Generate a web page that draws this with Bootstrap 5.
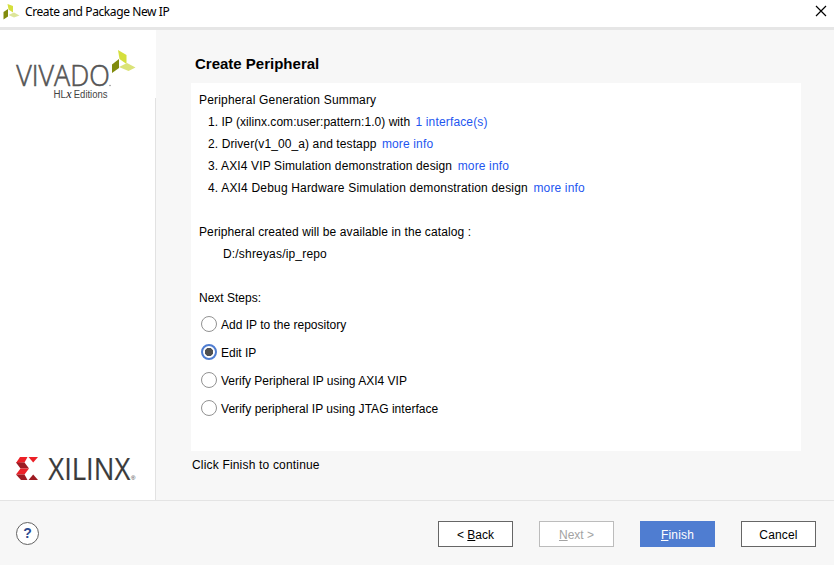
<!DOCTYPE html>
<html lang="en">
<head>
<meta charset="utf-8">
<meta name="viewport" content="width=device-width, initial-scale=1">
<title>Create and Package New IP</title>
<link href="https://cdn.jsdelivr.net/npm/bootstrap@5.3.0/dist/css/bootstrap.min.css" rel="stylesheet">
<style>
body{font-family:"Liberation Sans",Arial,sans-serif;font-size:12px;line-height:22px;color:#000;background:#f7f7f7}
svg{display:block;overflow:visible}
.wizard{width:834px;height:565px}
.titlebar{height:30px;border-bottom:3px solid #e6e6e6;font-family:"Noto Sans","Open Sans",sans-serif;padding:0 7px 3px 3px}
.title-text{font-size:12px;letter-spacing:-.4px;margin-left:5px}
.sidebar{width:156px;padding:19px 0 14px 15px;background:linear-gradient(#e2e2e2,#e2e2e2) right bottom/1px calc(100% - 68px) no-repeat #fff}
.content{padding:23px 33px 0 35px}
.page-title{font-size:15px;font-weight:700;line-height:22px;margin:0 0 8px 4px}
.summary{height:368px;padding:6px 8px}
.summary ol{padding-left:9px;margin-bottom:22px;list-style:none}
.summary a{color:#1e56f0;text-decoration:none;margin-left:2px;letter-spacing:.15px}
.ls-0{letter-spacing:.04px}
.ls-1{letter-spacing:.1px}
.ls-2{letter-spacing:.13px}
.ls-3{letter-spacing:.18px}
.path-text{padding-left:24px;margin-bottom:22px}
.form-check{min-height:28px;height:28px;padding-left:2px;margin:0;position:static}
.form-check label{padding-top:1px}
.choices{padding-top:1px}
.form-check .form-check-input{float:none;margin:0 4px 0 0;width:16px;height:16px;border:1px solid #929292;background:#fff;box-shadow:none;flex-shrink:0}
.form-check .form-check-input:checked{border:2px solid #4f7dd1;background:radial-gradient(circle,#505050 0 3.8px,#fff 4.5px)}
.hint{margin:3px 0 0 1px}
.footer-bar{height:65px;border-top:1px solid #e4e4e4;padding:0 18px 0 16px}
.help{width:23px;height:23px;border:1px solid #626262;color:#2b4a8f;font-size:14px;font-weight:700;line-height:21px;padding:0}
.actions{gap:26px;margin-top:2px}
.wiz-btn{width:75px;height:26px;border:1px solid #666;border-radius:0;background:#fff;color:#000;font-size:12px;line-height:24px;padding:1px 0 0}
.wiz-btn:disabled{border-color:#bcbcbc;color:#a3a3a3;background:#fff;opacity:1}
.wiz-btn.primary{background:#4f7dd1;border-color:#4f7dd1;color:#fff}
</style>
</head>
<body>
<div class="wizard d-flex flex-column overflow-hidden">
  <header class="titlebar bg-white d-flex align-items-center flex-shrink-0">
    <svg width="17" height="16" viewBox="0 0 34 32"><path d="M9 0 20 4v13l-9-6z" fill="#d5df3d"/><path d="M1 16l9-6v15l-9 6z" fill="#818b0d"/><path d="M11 22l11-5 11 6-11 4z" fill="#dde59a"/></svg>
    <span class="title-text">Create and Package New IP</span>
    <svg class="ms-auto" width="12" height="12" viewBox="0 0 12 12"><path d="M1 0l10 10M11 0L1 10" stroke="#000" stroke-width="1.2"/></svg>
  </header>
  <main class="d-flex flex-grow-1">
    <aside class="sidebar d-flex flex-column justify-content-between flex-shrink-0">
      <svg width="122" height="54" viewBox="0 0 122 54">
        <text x="1.300" y="37" font-family="Open Sans,sans-serif" font-size="29" font-weight="300" fill="#555" stroke="#555" stroke-width=".6" textLength="93.500" lengthAdjust="spacingAndGlyphs">VIVADO</text>
        <text x="38.500" y="48.500" font-family="Liberation Sans,sans-serif" font-size="10" fill="#444" textLength="12.500" lengthAdjust="spacingAndGlyphs">HL</text>
        <text x="51.200" y="48.500" font-family="Liberation Serif,serif" font-style="italic" font-size="12" fill="#222">x</text>
        <text x="58.800" y="48.500" font-family="Liberation Sans,sans-serif" font-size="10" fill="#444" textLength="33.700" lengthAdjust="spacingAndGlyphs">Editions</text>
        <path d="M103 1l8.500 5v9l-7-5z" fill="#d5df3d"/><path d="M97 15.500l7-5.500v9l-7 5z" fill="#818b0d"/><path d="M104 18l8-4 8.500 4.500-7 3.500z" fill="#dbe378"/><circle cx="95" cy="36.500" r=".7" fill="#777"/>
      </svg>
      <svg width="122" height="29" viewBox="0 0 122 29">
        <path d="M5 0h7.500L9.500 5.500 1 6z" fill="#ec2027"/><path d="M1 5.500h8.500l4.500 6H5.500z" fill="#9e1b22"/><path d="M5.500 11.500H14l-4.500 6H1z" fill="#ec2027"/><path d="M1 17.500h8.500l3 5.500H6z" fill="#9e1b22"/><path d="M13.500 0H23l-4.800 5.500z" fill="#ec2027"/><path d="M18.200 17.500L23 23h-9.500z" fill="#9e1b22"/>
        <text x="33.300" y="22.800" font-family="Open Sans,sans-serif" font-size="31.500" fill="#3b3b3b" stroke="#3b3b3b" stroke-width=".2" textLength="82" lengthAdjust="spacingAndGlyphs">XILINX</text>
        <text x="116" y="23" font-family="Liberation Sans,sans-serif" font-size="6" fill="#333">®</text>
      </svg>
    </aside>
    <section class="content flex-grow-1">
      <h1 class="page-title">Create Peripheral</h1>
      <div class="summary bg-white">
        <div class="ls-3">Peripheral Generation Summary</div>
        <ol>
          <li class="ls-0">1. IP (xilinx.com:user:pattern:1.0) with <a href="#">1 interface(s)</a></li>
          <li class="ls-1">2. Driver(v1_00_a) and testapp <a href="#">more info</a></li>
          <li class="ls-2">3. AXI4 VIP Simulation demonstration design <a href="#">more info</a></li>
          <li class="ls-3">4. AXI4 Debug Hardware Simulation demonstration design <a href="#">more info</a></li>
        </ol>
        <div class="ls-1">Peripheral created will be available in the catalog :</div>
        <div class="path-text ls-3">D:/shreyas/ip_repo</div>
        <div>Next Steps:</div>
        <div class="choices">
          <div class="form-check d-flex align-items-center"><input class="form-check-input" type="radio" name="next" id="n1"><label for="n1">Add IP to the repository</label></div>
          <div class="form-check d-flex align-items-center"><input class="form-check-input" type="radio" name="next" id="n2" checked><label for="n2">Edit IP</label></div>
          <div class="form-check d-flex align-items-center"><input class="form-check-input" type="radio" name="next" id="n3"><label for="n3">Verify Peripheral IP using AXI4 VIP</label></div>
          <div class="form-check d-flex align-items-center"><input class="form-check-input" type="radio" name="next" id="n4"><label for="n4" class="ls-0">Verify peripheral IP using JTAG interface</label></div>
        </div>
      </div>
      <div class="hint ls-3">Click Finish to continue</div>
    </section>
  </main>
  <footer class="footer-bar d-flex align-items-center justify-content-between flex-shrink-0">
    <button class="help btn rounded-circle bg-white" type="button">?</button>
    <div class="actions d-flex">
      <button class="btn wiz-btn" type="button">&lt; <u>B</u>ack</button>
      <button class="btn wiz-btn" type="button" disabled><u>N</u>ext &gt;</button>
      <button class="btn wiz-btn primary ls-3" type="button"><u>F</u>inish</button>
      <button class="btn wiz-btn ls-3" type="button">Cancel</button>
    </div>
  </footer>
</div>
<script src="https://cdn.jsdelivr.net/npm/bootstrap@5.3.0/dist/js/bootstrap.bundle.min.js"></script>
</body>
</html>
